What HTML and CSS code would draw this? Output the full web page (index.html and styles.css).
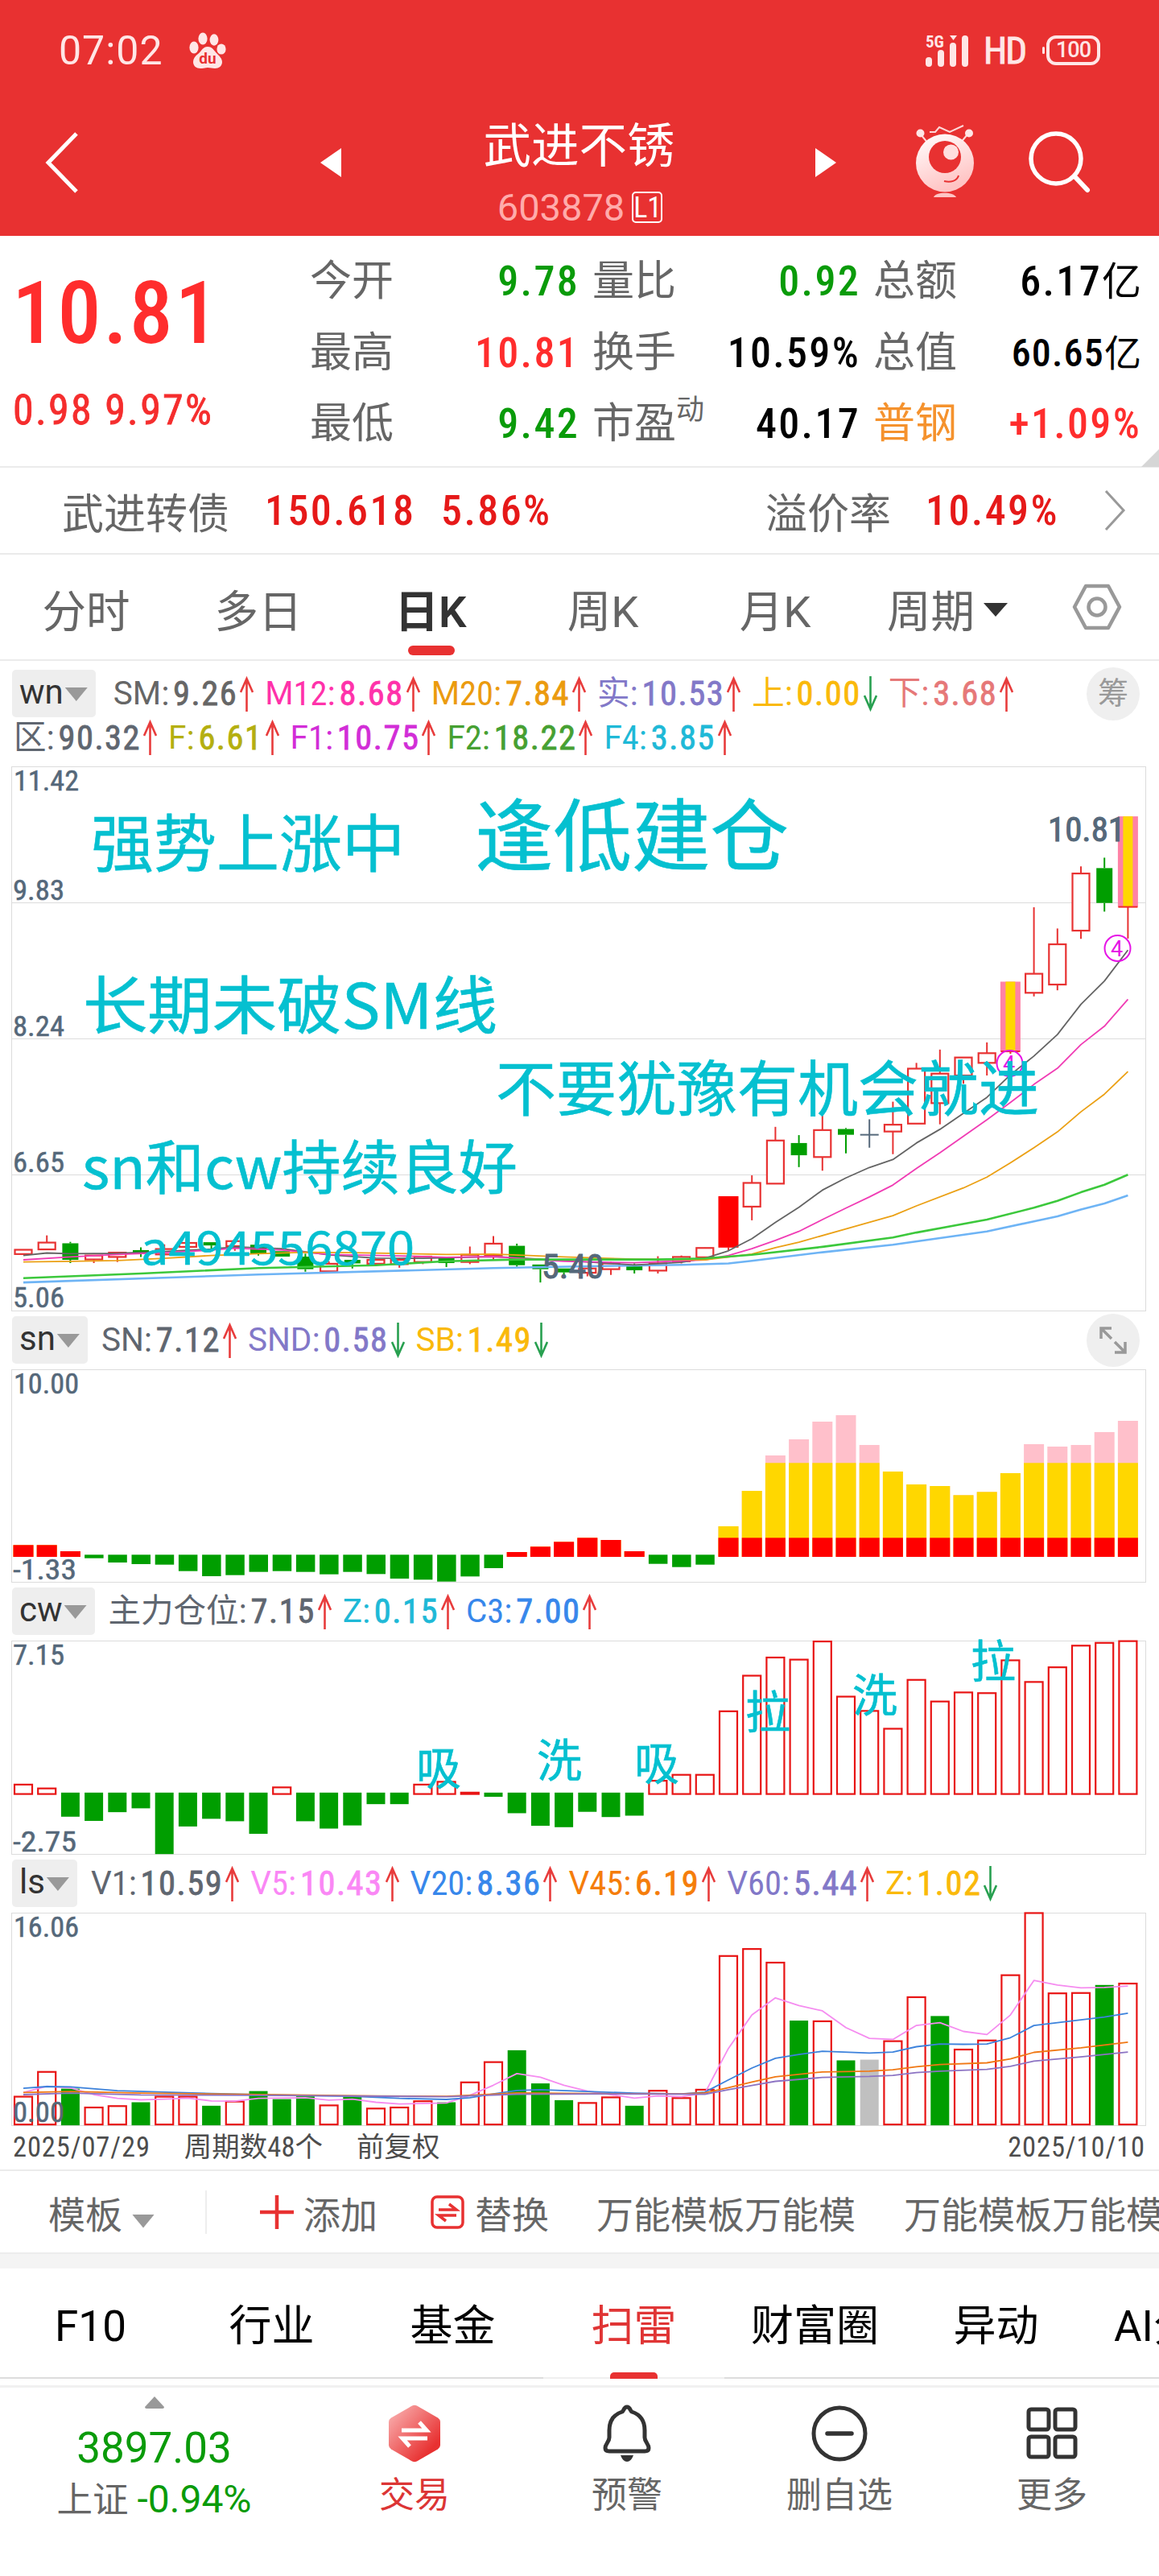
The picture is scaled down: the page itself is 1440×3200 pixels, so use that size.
FILE: index.html
```html
<!DOCTYPE html>
<html lang="zh-CN">
<head>
    <meta charset="UTF-8">
    <meta name="viewport" content="width=device-width, initial-scale=1.0">
    <title>武进不锈 603878</title>
    <link rel="stylesheet" href="styles.css">
</head>
<body>

    <header class="header">
        <div class="status">
            <span class="clock">07:02</span>
            <svg class="paw" width="46" height="46" viewBox="0 0 46 46">
                <g fill="#ffe6e6">
                    <ellipse cx="6" cy="19" rx="5.6" ry="7.4"/>
                    <ellipse cx="17" cy="8" rx="5.6" ry="7.6"/>
                    <ellipse cx="31" cy="9.5" rx="5.4" ry="7.2"/>
                    <ellipse cx="40" cy="21" rx="5.6" ry="6.6"/>
                    <path d="M23 18c-6 0-8 6-12 9-4 3-6 6-6 10 0 5 4 8 9 8 4 0 6-1 9-1s6 1 9 1c5 0 9-3 9-8 0-4-3-7-6-10-4-4-6-9-12-9z"/>
                </g>
                <text x="23" y="39" class="paw-text">du</text>
            </svg>
            <span class="grow"></span>
            <svg class="signal" width="56" height="42" viewBox="0 0 56 42">
                <text x="0" y="17" class="signal-text">5G</text>
                <g fill="#ffe6e6">
                    <rect x="0" y="29" width="8" height="12" rx="4"/>
                    <rect x="15" y="20" width="8" height="21" rx="4"/>
                    <rect x="30" y="11" width="8" height="30" rx="4"/>
                    <path d="M30 2h9l-4.5 6z"/>
                    <rect x="45" y="2" width="8" height="39" rx="4"/>
                </g>
            </svg>
            <span class="hd">HD</span>
            <span class="battery">100</span>
        </div>
        <div class="titlebar">
            <svg class="back" width="44" height="80" viewBox="0 0 44 80"><path d="M39 4L4 40l35 36" fill="none" stroke="#fff" stroke-width="5"/></svg>
            <svg class="prev" width="26" height="36" viewBox="0 0 26 36"><path d="M26 0v36L0 18z" fill="#fff"/></svg>
            <div class="title">
                <div class="name">武进不锈</div>
                <div class="code">603878<span class="level">L1</span></div>
            </div>
            <svg class="next" width="26" height="36" viewBox="0 0 26 36"><path d="M0 0v36l26-18z" fill="#fff"/></svg>
            <svg class="robot" width="76" height="94" viewBox="0 0 76 94">
                <defs>
                    <linearGradient id="body" x1="0" y1="0" x2="0.4" y2="1">
                        <stop offset="0" stop-color="#fff"/>
                        <stop offset="1" stop-color="#ffc4c4"/>
                    </linearGradient>
                </defs>
                <g stroke="#ffd8d8" stroke-width="2" fill="none">
                    <path d="M8 12l9 11M66 12l-9 11"/>
                    <path d="M19 9h7l5-6 13 6 17-8"/>
                </g>
                <circle cx="7.5" cy="10.5" r="5" fill="#ffe6e6"/>
                <circle cx="68" cy="10.5" r="5" fill="#ffe6e6"/>
                <circle cx="38" cy="47.5" r="36" fill="url(#body)"/>
                <circle cx="38" cy="40" r="20" fill="#e83131"/>
                <circle cx="45.5" cy="34" r="9.5" fill="#ffdede"/>
                <path d="M37 70c8 2 16 0 18-7" fill="none" stroke="#e83131" stroke-width="2"/>
                <path d="M24 90c2-7 25-7 28 0z" fill="#ffc4c4"/>
            </svg>
            <svg class="search" width="80" height="80" viewBox="0 0 80 80"><circle cx="35" cy="35" r="31" fill="none" stroke="#fff" stroke-width="5.5"/><path d="M58 57l16 17" stroke="#fff" stroke-width="6" stroke-linecap="round"/></svg>
        </div>
    </header>

    <section class="quote">
        <div class="price">
            <div class="last">10.81</div>
            <div class="change">0.98 9.97%</div>
        </div>
        <div class="stats">
            <div><span>今开</span><b class="down">9.78</b></div>
            <div><span>量比</span><b class="down">0.92</b></div>
            <div><span>总额</span><b>6.17<i>亿</i></b></div>
            <div><span>最高</span><b class="up">10.81</b></div>
            <div><span>换手</span><b>10.59%</b></div>
            <div><span>总值</span><b class="small">60.65<i>亿</i></b></div>
            <div><span>最低</span><b class="down">9.42</b></div>
            <div><span>市盈<sup>动</sup></span><b>40.17</b></div>
            <div><span class="sector">普钢</span><b class="up">+1.09%</b></div>
        </div>
        <svg class="corner" width="22" height="22" viewBox="0 0 22 22"><path d="M22 0v22H0z" fill="#d6d6d6"/></svg>
    </section>

    <section class="bond">
        <span>武进转债</span><b class="bond-price">150.618</b><b>5.86%</b>
        <span class="grow"></span>
        <span>溢价率</span><b class="premium">10.49%</b>
        <svg width="27" height="52" viewBox="0 0 27 52"><path d="M2 2l22 24L2 50" fill="none" stroke="#999" stroke-width="3"/></svg>
    </section>

    <nav class="periods">
        <a>分时</a><a>多日</a><a class="active">日K</a><a>周K</a><a>月K</a>
        <a>周期<i class="caret dark"></i></a>
        <svg width="62" height="58" viewBox="0 0 62 58"><path d="M17 3h28l14 26-14 26H17L3 29z" fill="none" stroke="#999" stroke-width="4.5" stroke-linejoin="round"/><circle cx="31" cy="29" r="10.5" fill="none" stroke="#999" stroke-width="4.5"/></svg>
    </nav>

    <section class="charts">
        <div class="legend main">
            <div class="row"><span class="tag">wn<i class="caret"></i></span><div class="items" id="wn1"></div><span class="round">筹</span></div>
            <div class="row second"><div class="items" id="wn2"></div></div>
        </div>
        <svg class="panel" id="kline" width="1440" height="677" viewBox="0 952 1440 677"></svg>

        <div class="legend">
            <div class="row"><span class="tag">sn<i class="caret"></i></span><div class="items" id="sn"></div>
                <span class="round"><svg width="34" height="34" viewBox="0 0 34 34"><path d="M2 15V2h13M3 3l12 12M32 19v13H19M31 31L19 19" fill="none" stroke="#999" stroke-width="3.5"/></svg></span>
            </div>
        </div>
        <svg class="panel" id="snChart" width="1440" height="265" viewBox="0 1701 1440 265"></svg>

        <div class="legend">
            <div class="row"><span class="tag">cw<i class="caret"></i></span><div class="items" id="cw"></div></div>
        </div>
        <svg class="panel" id="cwChart" width="1440" height="266" viewBox="0 2038 1440 266"></svg>

        <div class="legend">
            <div class="row"><span class="tag">ls<i class="caret"></i></span><div class="items" id="ls"></div></div>
        </div>
        <svg class="panel" id="lsChart" width="1440" height="265" viewBox="0 2376 1440 265"></svg>

        <div class="dates"><span>2025/07/29</span><span>周期数48个</span><span>前复权</span><span class="grow"></span><span>2025/10/10</span></div>
    </section>

    <div class="templates">
        <span class="tpl">模板<i class="caret"></i></span>
        <span class="divider"></span>
        <svg width="42" height="42" viewBox="0 0 42 42"><path d="M21 0v42M0 21h42" stroke="#e83131" stroke-width="4.5"/></svg>
        <span class="add">添加</span>
        <svg width="42" height="42" viewBox="0 0 42 42"><rect x="2" y="2" width="38" height="38" rx="6" fill="none" stroke="#e83131" stroke-width="3.5"/><path d="M10 18h22l-9-7M32 25H10l9 7" fill="none" stroke="#e83131" stroke-width="3.5"/></svg>
        <span class="swap">替换</span>
        <span class="tpl-name">万能模板万能模</span>
        <span>万能模板万能模</span>
    </div>

    <nav class="sections">
        <a>F10</a><a>行业</a><a>基金</a><a class="active">扫雷</a><a>财富圈</a><a>异动</a><a class="cut">AI分析</a>
    </nav>

    <footer class="footer">
        <div class="index">
            <svg width="24" height="15" viewBox="0 0 24 15"><path d="M12 0l12 13q0 2-2 2H2q-2 0-2-2z" fill="#999"/></svg>
            <div class="index-value">3897.03</div>
            <div class="index-name">上证 <em>-0.94%</em></div>
        </div>
        <div class="action trade">
            <svg width="66" height="72" viewBox="0 0 66 72">
                <defs>
                    <linearGradient id="hex" x1="0" y1="0" x2="1" y2="1">
                        <stop offset="0.1" stop-color="#f8a8a8"/>
                        <stop offset="0.8" stop-color="#e83131"/>
                    </linearGradient>
                </defs>
                <path d="M30 1.5q3-1.5 6 0l26 15q3 2 3 5v29q0 3-3 5l-26 15q-3 1.5-6 0l-26-15q-3-2-3-5v-29q0-3 3-5z" fill="url(#hex)"/>
                <path d="M17 32h31l-9-10M49 42H18l9 10" fill="none" stroke="#fff" stroke-width="5"/>
            </svg>
            交易
        </div>
        <div class="action">
            <svg width="66" height="72" viewBox="0 0 66 72"><path d="M33 3c-4 0-4 5-6 6C15 13 11 21 11 32v9c0 5-5 8-5 13 0 3 2 4 5 4h44c3 0 5-1 5-4 0-5-5-8-5-13v-9c0-11-4-19-16-23-2-1-2-6-6-6z" fill="none" stroke="#333" stroke-width="5"/><path d="M25 63h16q-3 8-8 8t-8-8z" fill="#333"/></svg>
            预警
        </div>
        <div class="action">
            <svg width="72" height="72" viewBox="0 0 72 72"><circle cx="36" cy="36" r="32" fill="none" stroke="#333" stroke-width="5"/><path d="M21 36h30" stroke="#333" stroke-width="5.5" stroke-linecap="round"/></svg>
            删自选
        </div>
        <div class="action">
            <svg width="66" height="72" viewBox="0 0 66 72"><g fill="none" stroke="#333" stroke-width="5"><rect x="4" y="6" width="25" height="25" rx="3"/><rect x="37" y="6" width="25" height="25" rx="3"/><rect x="4" y="40" width="25" height="25" rx="3"/><rect x="37" y="40" width="25" height="25" rx="3"/></g></svg>
            更多
        </div>
    </footer>

    <script src="charts.js"></script>
</body>
</html>
```

FILE: styles.css
```css
* {
    box-sizing: border-box;
}
body {
    margin: 0;
    width: 1440px;
    height: 3200px;
    overflow: hidden;
    background: #fff;
    font-family: Roboto, "Noto Sans CJK SC", sans-serif;
    color: #666;
}
svg {
    display: block;
    flex: none;
}
.grow {
    flex: 1;
}
.up {
    color: #ff2d2d;
}
.down {
    color: #0a9b0a;
}

/* header */
.header {
    height: 293px;
    background: #e83131;
    color: #fff;
}
.status {
    display: flex;
    align-items: center;
    height: 125px;
    padding: 0 73px 0 73px;
    color: #ffe6e6;
}
.clock {
    width: 162px;
    font-size: 50px;
    letter-spacing: 1px;
}
.paw-text {
    font: 700 19px Roboto, sans-serif;
    fill: #e83131;
    text-anchor: middle;
}
.signal {
    overflow: visible;
}
.signal-text {
    font: 700 21px Roboto, sans-serif;
    font-stretch: 75%;
    fill: #ffe6e6;
}
.hd {
    margin: 0 0 0 16px;
    width: 71px;
    font-size: 47px;
    font-stretch: 75%;
    letter-spacing: -2px;
    -webkit-text-stroke: 1px #ffe6e6;
}
.battery {
    position: relative;
    width: 67px;
    height: 37px;
    margin: 0 0 0 7px;
    border: 4px solid #ffe6e6;
    border-radius: 12px;
    font-size: 27px;
    font-weight: 500;
    line-height: 29px;
    text-align: center;
    letter-spacing: -1px;
}
.battery::before {
    content: "";
    position: absolute;
    left: -9px;
    top: 10px;
    width: 3px;
    height: 9px;
    border-radius: 2px;
    background: #ffe6e6;
}
.titlebar {
    display: flex;
    align-items: center;
    height: 154px;
    padding: 0 80px 0 56px;
}
.prev {
    margin-left: 298px;
}
.title {
    width: 589px;
    margin-top: 28px;
    text-align: center;
}
.name {
    height: 76px;
    margin: 7px 0 0 2px;
    font-size: 59.5px;
    line-height: 76px;
}
.code {
    display: flex;
    justify-content: center;
    align-items: center;
    gap: 9px;
    height: 76px;
    padding-left: 4px;
    font-size: 47px;
    color: #ffabab;
}
.level {
    width: 38px;
    height: 39px;
    border: 2px solid #fff;
    border-radius: 5px;
    font-size: 36px;
    font-stretch: 75%;
    font-weight: 400;
    line-height: 36px;
    color: #fff;
}
.robot {
    margin-left: 97px;
}
.search {
    margin: 0 0 0 65px;
}

/* quote block */
.quote {
    position: relative;
    display: flex;
    height: 288px;
    border-bottom: 2px solid #ebebeb;
}
.price {
    width: 385px;
    color: #f52d2d;
    font-stretch: 75%;
}
.last {
    height: 180px;
    padding: 6px 0 0 15px;
    font-size: 108px;
    font-weight: 500;
    line-height: 180px;
    letter-spacing: 2.6px;
    color: #ff2d2d;
}
.change {
    padding: 1px 0 0 16px;
    font-size: 52px;
    line-height: 72px;
    letter-spacing: 2.3px;
    -webkit-text-stroke: 0.8px #f52d2d;
}
.stats {
    display: grid;
    grid-template-columns: 335px 333px 333px;
    grid-auto-rows: 88.7px;
    column-gap: 16px;
    padding-top: 13px;
    font-size: 52px;
    line-height: 88.7px;
}
.stats div {
    display: flex;
    justify-content: space-between;
}
.stats b {
    font-stretch: 75%;
    font-weight: 500;
    letter-spacing: 2.3px;
}
.stats b:not(.up):not(.down) {
    color: #000;
}
.stats b i {
    font-size: 49px;
    font-style: normal;
    font-weight: 400;
    letter-spacing: 0;
}
.stats .small {
    font-size: 48px;
    letter-spacing: 1.2px;
}
.stats .small i {
    font-size: 46px;
}
.stats sup {
    position: relative;
    top: -9px;
    font-size: 35px;
    line-height: 0;
    vertical-align: 14px;
}
.sector {
    color: #f5922d;
}
.corner {
    position: absolute;
    right: 0;
    bottom: -1px;
}

/* convertible bond */
.bond {
    display: flex;
    align-items: center;
    height: 108px;
    padding: 0 41px 0 77px;
    border-bottom: 2px solid #ebebeb;
    font-size: 52px;
}
.bond b {
    font-stretch: 75%;
    font-weight: 500;
    letter-spacing: 2.4px;
    color: #e61919;
}
.bond-price {
    width: 219px;
    margin-left: 44px;
}
.bond .premium {
    width: 222px;
    margin-left: 43px;
}

/* period tabs */
.periods {
    display: flex;
    height: 132px;
    border-bottom: 2px solid #ebebeb;
    font-size: 54.5px;
    line-height: 143px;
}
.periods a {
    position: relative;
    width: 214px;
    text-align: center;
}
.periods .active {
    color: #333;
    font-weight: 600;
}
.periods .active::after {
    content: "";
    position: absolute;
    left: 79px;
    bottom: 5px;
    width: 58px;
    height: 12px;
    border-radius: 6px;
    background: #e83131;
}
.periods svg {
    margin: 36px 0 0 48px;
}
.caret {
    display: inline-block;
    width: 28px;
    height: 17px;
    margin-left: 12px;
    background: #999;
    clip-path: polygon(0 0, 100% 0, 50% 100%);
}
.caret.dark {
    width: 30px;
    margin-left: 11px;
    margin-bottom: 13px;
    background: #333;
}

/* charts */
.legend {
    height: 72px;
    padding: 6px 0 7px 15px;
}
.legend.main {
    height: 131px;
    padding-top: 11px;
}
.row {
    display: flex;
    align-items: center;
    height: 59px;
    font-size: 42.5px;
    line-height: 55px;
}
.row.second {
    height: 50px;
}
.tag {
    height: 59px;
    padding: 0 10px 0 9px;
    border-radius: 5px;
    background: #eee;
    font-size: 42px;
    line-height: 56px;
    color: #333;
}
.tag .caret {
    margin-left: 2px;
    margin-bottom: 3px;
}
.items {
    display: flex;
    gap: 14px;
    margin-left: 17px;
    flex: 1;
}
.main .items {
    margin-left: 22px;
}
.main .second .items {
    margin-left: 2px;
}
.item {
    display: flex;
    align-items: center;
    font-stretch: 75%;
}
.item em {
    font-size: 40.5px;
    font-style: normal;
    font-stretch: 100%;
}
.item i {
    font-style: normal;
    margin-left: 5px;
    letter-spacing: 1.5px;
    -webkit-text-stroke: 0.8px currentColor;
}
.item svg {
    margin-left: 3px;
}
.round {
    display: flex;
    align-items: center;
    justify-content: center;
    width: 66px;
    height: 66px;
    margin: 0 24px 0 0;
    border-radius: 50%;
    background: #efefef;
    font-size: 38px;
    color: #999;
}
.panel {
    overflow: visible;
}
.panel text {
    font-family: Roboto, "Noto Sans CJK SC", sans-serif;
}
.panel .axis {
    font-size: 35px;
    font-stretch: 75%;
    fill: #55687a;
    stroke: #55687a;
    stroke-width: 0.5px;
}
.panel .mark {
    font-size: 42px;
    font-stretch: 75%;
    fill: #55687a;
    stroke: #55687a;
    stroke-width: 1px;
}
.panel .note {
    font-family: "Noto Sans CJK SC", sans-serif;
    fill: #05c0d0;
    stroke: #05c0d0;
    stroke-width: 0.6px;
}
.panel .signal4 {
    font-size: 27px;
    fill: #e614e6;
    text-anchor: middle;
}
.dates {
    display: flex;
    height: 56px;
    padding: 0 17px 4px 16px;
    border-bottom: 2px solid #ebebeb;
    font-size: 34.5px;
    font-stretch: 75%;
    line-height: 53px;
    letter-spacing: 0.9px;
    color: #4d4d4d;
}
.dates span + span {
    margin-left: 42px;
    letter-spacing: 0;
}
.dates span:last-child {
    letter-spacing: 0.9px;
}

/* template bar */
.templates {
    display: flex;
    align-items: center;
    height: 101px;
    padding-left: 60px;
    overflow: hidden;
    font-size: 46px;
    white-space: nowrap;
}
.tpl {
    width: 195px;
    flex: none;
}
.divider {
    width: 2px;
    height: 54px;
    margin-right: 66px;
    background: #eee;
    flex: none;
}
.add {
    margin: 0 66px 0 12px;
}
.swap {
    margin: 0 59px 0 13px;
}
.tpl-name {
    margin-right: 60px;
}

/* section tabs */
.sections {
    display: flex;
    height: 157px;
    padding-top: 20px;
    overflow: hidden;
    background: linear-gradient(#ececec 2px, #f4f4f4 2px, #f4f4f4 20px, #fff 20px);
    font-size: 53px;
    line-height: 145px;
    color: #000;
}
.sections a {
    position: relative;
    flex: none;
    width: 225px;
    border-bottom: 2px solid #ddd;
    text-align: center;
}
.sections .active {
    color: #e03535;
    border-color: #efefef;
}
.sections .active::after {
    content: "";
    position: absolute;
    left: 83px;
    bottom: -2px;
    width: 59px;
    height: 8px;
    border-radius: 5px 5px 0 0;
    background: #e83131;
}
.sections .cut {
    width: 90px;
    padding-left: 34px;
    overflow: hidden;
    text-align: left;
    white-space: nowrap;
}

/* bottom bar */
.footer {
    display: grid;
    grid-template-columns: 383px repeat(4, 264px);
    margin-top: 8px;
    border-top: 3px solid #f1f1f1;
}
.index {
    display: flex;
    flex-direction: column;
    align-items: center;
    padding-top: 11px;
}
.index-value {
    margin-top: 20px;
    font-size: 53px;
    line-height: 58px;
    color: #0a9b0a;
}
.index-name {
    margin-top: 4px;
    font-size: 44.5px;
    line-height: 61px;
    white-space: nowrap;
}
.index-name em {
    font-size: 48px;
    font-style: normal;
    color: #0a9b0a;
}
.action {
    display: flex;
    flex-direction: column;
    align-items: center;
    padding-top: 21px;
    font-size: 44px;
    line-height: 83px;
}
.trade {
    color: #dc3535;
}
```

FILE: charts.js
```js
const GREEN = '#009e00';
const RED = '#e81414';
const STEP = 29.2;

const cx = i => 29 + i * STEP;

// ---------- legends ----------
const ARROWS = {
    up: '<svg width="17" height="44" viewBox="0 0 17 44"><path d="M8.5 44V3M1 20L8.5 3 16 20" fill="none" stroke="#e83c3c" stroke-width="2.6"/></svg>',
    down: '<svg width="17" height="44" viewBox="0 0 17 44"><path d="M8.5 0v41M1 24l7.5 17L16 24" fill="none" stroke="#28a050" stroke-width="2.6"/></svg>'
};

function legend(id, items) {
    document.getElementById(id).innerHTML = items.map(([name, value, color, dir]) => {
        // letters are set wider than the digits
        const label = name.replace(/[^0-9]+/, m => `<em>${m}</em>`);
        return `<span class="item" style="color:${color}">${label}:<i>${value}</i>${ARROWS[dir || 'up']}</span>`;
    }).join('');
}

legend('wn1', [['SM', '9.26', '#666'], ['M12', '8.68', '#ff32aa'], ['M20', '7.84', '#eb9b0f'],
    ['实', '10.53', '#8278c8'], ['上', '0.00', '#fab90a', 'down'], ['下', '3.68', '#e67878']]);
legend('wn2', [['区', '90.32', '#5f6670'], ['F', '6.61', '#b4af0f'], ['F1', '10.75', '#d22dd7'],
    ['F2', '18.22', '#46a032'], ['F4', '3.85', '#1eb9d7']]);
legend('sn', [['SN', '7.12', '#5f6670'], ['SND', '0.58', '#8278c8', 'down'], ['SB', '1.49', '#fab90a', 'down']]);
legend('cw', [['主力仓位', '7.15', '#5f6670'], ['Z', '0.15', '#1eb9d7'], ['C3', '7.00', '#3787eb']]);
legend('ls', [['V1', '10.59', '#5f6670'], ['V5', '10.43', '#fa87f5'], ['V20', '8.36', '#3787eb'],
    ['V45', '6.19', '#f57d0a'], ['V60', '5.44', '#8278c8'], ['Z', '1.02', '#fab90a', 'down']]);

// ---------- svg helpers ----------
function rect(x, y, w, h, fill) {
    return `<rect x="${x}" y="${y}" width="${w}" height="${h}" fill="${fill}"/>`;
}
function hollow(x, y, w, h, color) {
    return `<rect x="${x + 1}" y="${y + 1}" width="${w - 2}" height="${Math.max(h - 2, 0.5)}" fill="#fff" stroke="${color}" stroke-width="2.2"/>`;
}
function line(x1, y1, x2, y2, color, w = 1.5) {
    return `<line x1="${x1}" y1="${y1}" x2="${x2}" y2="${y2}" stroke="${color}" stroke-width="${w}"/>`;
}
function curve(points, toY, color, w) {
    const pts = points.map(([i, v]) => `${cx(i).toFixed(1)},${toY(v).toFixed(1)}`).join(' ');
    return `<polyline points="${pts}" fill="none" stroke="${color}" stroke-width="${w}" stroke-linejoin="round"/>`;
}
function text(cls, x, y, str, size, len) {
    const extra = (size ? ` font-size="${size}"` : '') + (len ? ` textLength="${len}" lengthAdjust="spacingAndGlyphs"` : '');
    return `<text class="${cls}" x="${x}" y="${y}"${extra}>${str}</text>`;
}
function frame(top, bottom) {
    return `<rect x="14.5" y="${top + 0.5}" width="1409" height="${bottom - top - 1}" fill="none" stroke="#dcdcdc"/>`;
}
function draw(id, html) {
    document.getElementById(id).innerHTML = html;
}

// ---------- k line: [type, high, top, bottom, low] ----------
const candles = [
    ['r', 1372, 1372, 1384, 1384], ['r', 1332, 1352, 1371, 1371], ['g', 1350, 1354, 1400, 1409], ['r', 1388, 1388, 1399, 1409],
    ['r', 1380, 1380, 1392, 1406], ['g', 1365, 1373, 1382, 1392], ['r', 1357, 1370, 1385, 1385], ['r', 1353, 1353, 1364, 1364],
    ['g', 1351, 1351, 1360, 1370], ['r', 1348, 1348, 1362, 1375], ['g', 1356, 1358, 1382, 1388], ['g', 1376, 1376, 1391, 1391],
    ['g', 1383, 1391, 1426, 1433], ['r', 1404, 1411, 1432, 1432], ['g', 1400, 1400, 1410, 1424], ['r', 1400, 1400, 1411, 1418],
    ['r', 1395, 1400, 1412, 1422], ['r', 1391, 1391, 1406, 1412], ['g', 1395, 1395, 1409, 1420], ['r', 1363, 1386, 1406, 1412],
    ['r', 1334, 1355, 1388, 1400], ['g', 1355, 1361, 1415, 1419], ['g', 1413, 1413, 1426, 1463], ['g', 1424, 1424, 1435, 1446],
    ['r', 1424, 1424, 1436, 1446], ['r', 1405, 1410, 1426, 1442], ['g', 1410, 1418, 1429, 1438], ['r', 1390, 1410, 1430, 1438],
    ['r', 1388, 1392, 1404, 1410], ['r', 1366, 1367, 1393, 1393], ['solid', 1223, 1223, 1366, 1373], ['r', 1165, 1186, 1252, 1290],
    ['r', 1030, 1068, 1188, 1188], ['g', 1053, 1075, 1109, 1142], ['r', 995, 1039, 1114, 1152], ['g', 1033, 1036, 1052, 1104],
    ['cross', 1009, 1052, 1052, 1088], ['r', 960, 1024, 1043, 1106], ['r', 852, 868, 1021, 1021], ['r', 815, 882, 964, 1023],
    ['r', 837, 837, 887, 910], ['r', 795, 825, 852, 887], ['limit', 626, 626, 820, 827], ['r', 419, 604, 657, 667],
    ['r', 478, 522, 634, 650], ['r', 305, 325, 484, 507], ['g', 281, 310, 407, 431], ['limit', 166, 166, 418, 506]
];
const averages = [
    ['#6eb4f5', 2.6, [[0, 1463], [10, 1441], [20, 1423], [24, 1418], [28, 1414], [30, 1410], [31, 1403], [34, 1379], [37, 1358], [41, 1321], [43, 1293], [44, 1279], [45, 1260], [46, 1243], [47, 1221]]],
    ['#646464', 1.8, [[0, 1388], [1, 1381], [2, 1383], [4, 1382], [6, 1377], [8, 1370], [9, 1364], [11, 1369], [13, 1386], [15, 1395], [17, 1396], [20, 1391], [22, 1398], [24, 1406], [26, 1414], [28, 1407], [29, 1396], [30, 1375], [31, 1341], [32, 1296], [33, 1254], [34, 1206], [35, 1172], [36, 1143], [37, 1121], [38, 1075], [39, 1037], [40, 992], [41, 948], [42, 885], [43, 833], [44, 773], [45, 689], [46, 624], [47, 538]]],
    ['#f03cb4', 1.8, [[0, 1400], [2, 1392], [4, 1385], [6, 1380], [8, 1373], [9, 1368], [11, 1373], [13, 1385], [16, 1389], [18, 1393], [20, 1391], [23, 1404], [26, 1408], [29, 1400], [30, 1388], [31, 1369], [32, 1346], [33, 1321], [34, 1288], [35, 1256], [36, 1225], [37, 1192], [38, 1146], [39, 1102], [40, 1056], [41, 1010], [42, 962], [43, 912], [44, 867], [45, 801], [46, 750], [47, 675]]],
    ['#eba014', 1.8, [[0, 1406], [2, 1404], [4, 1402], [6, 1396], [8, 1388], [10, 1383], [12, 1379], [14, 1380], [18, 1385], [20, 1384], [23, 1392], [26, 1398], [29, 1400], [31, 1384], [32, 1366], [33, 1351], [35, 1314], [37, 1277], [38, 1250], [40, 1200], [41, 1170], [42, 1130], [43, 1088], [44, 1044], [45, 988], [46, 939], [47, 876]]],
    ['#3cc83c', 2.6, [[0, 1451], [5, 1438], [10, 1423], [15, 1415], [18, 1404], [21, 1399], [24, 1399], [27, 1399], [29, 1396], [31, 1386], [34, 1364], [37, 1338], [38, 1324], [41, 1288], [43, 1255], [44, 1236], [45, 1212], [46, 1191], [47, 1163]]]
];

function drawKline() {
    const toY = v => 940 + v / 2.24;
    let out = frame(952, 1629);
    [1121.5, 1290.5, 1459.5].forEach(y => out += line(14, y, 1424, y, '#dcdcdc', 1));
    candles.forEach(([type, high, top, bottom, low], i) => {
        const x = cx(i);
        const [h, t, b, l] = [high, top, bottom, low].map(toY);
        const color = { g: GREEN, cross: '#55687a' }[type] || '#e83232';
        out += line(x, h, x, t, color, 2) + line(x, b, x, l, color, 2);
        if (type === 'r') out += hollow(x - 11.5, t - 1, 23, b - t + 2, color);
        if (type === 'g') out += rect(x - 10, t, 20, b - t, color);
        if (type === 'solid') out += rect(x - 12.5, t, 25, b - t, '#f00');
        if (type === 'cross') out += line(x - 11.5, t, x + 11.5, t, color, 2);
        if (type === 'limit') {
            out += rect(x - 12.5, t, 25, b - t, '#ff82a5') + rect(x - 6, t, 12, b - t, '#ffd700');
            out += line(x - 12, b, x + 12, b, '#f02828', 2);
        }
    });
    averages.forEach(([color, w, pts]) => out += curve(pts, toY, color, w));
    [[1388.5, 1178], [1254.5, 1321]].forEach(([x, y]) => {
        out += `<circle cx="${x}" cy="${y}" r="16" fill="none" stroke="#e614e6" stroke-width="2"/>` + text('signal4', x - 1, y + 9.5, '4');
    });
    out += text('axis', 17, 982, '11.42', 0, 81) + text('axis', 16, 1118, '9.83', 0, 64) + text('axis', 16, 1287, '8.24', 0, 64) +
        text('axis', 16, 1456, '6.65', 0, 64) + text('axis', 16, 1624, '5.06', 0, 64);
    out += text('mark', 1302, 1045, '10.81', 0, 96) + text('mark', 673, 1588, '5.40', 0, 77);
    out += text('note', 113, 1077, '强势上涨中', 78) + text('note', 590, 1074, '逢低建仓', 97.5) +
        text('note', 103, 1278, '长期未破SM线', 78, 515) + text('note', 102, 1477, 'sn和cw持续良好', 72.5, 541) +
        text('note', 616, 1380, '不要犹豫有机会就进', 75) + text('note', 175, 1571, 'a494556870', 56, 340);
    draw('kline', out);
}

// ---------- sn: stacked bars ----------
const sn = [
    868, 868, 891, 917, 933, 939, 941, 965, 984, 980, 968, 965, 968, 977, 968, 976, 993, 997, 1004, 985, 954,
    894, 874, 856, 841, 849, 891, 938, 950, 941,
    798, 666, 534, 474, 408, 384, 495, 594, 642, 648, 682, 670, 600, 492, 501, 495, 447, 405
];

function drawSn() {
    const toY = v => 1630 + v / 3;
    let out = frame(1701, 1966);
    sn.forEach((v, i) => {
        const x = cx(i) - 12.5;
        if (v > 904) {
            out += rect(x + 1, toY(904), 23.5, toY(v) - toY(904), GREEN);
            return;
        }
        const bands = [[v, '#ffc0cb'], [Math.max(v, 562), '#ffd700'], [Math.max(v, 841), '#f00']];
        bands.forEach(([top, color]) => out += rect(x, toY(top), 25, toY(912) - toY(top), color));
    });
    out += text('axis', 17, 1731, '10.00', 0, 81) + text('axis', 16, 1962, '-1.33', 0, 79);
    draw('snChart', out);
}

// ---------- cw: hollow up, solid down ----------
const cw = [
    454, 465, 546, 558, 533, 522, 653, 574, 552, 559, 595, 462, 559, 580, 571, 510, 510, 454, 446, 477,
    489, 536, 572, 576, 532, 547, 543, 443, 426, 426, 244, 142, 90, 96, 44, 202, 243, 294, 154, 216,
    190, 192, 98, 160, 118, 56, 48, 43
];

function drawCw() {
    const toY = v => 2020 + v / 2.306;
    let out = frame(2038, 2304);
    cw.forEach((v, i) => {
        if (v > 480) {
            out += rect(cx(i) - 11.5, toY(477), 23, toY(v) - toY(477), GREEN);
        } else {
            out += hollow(cx(i) - 12, toY(v) - 1, 24, toY(481) - toY(v) + 2, RED);
        }
    });
    out += text('axis', 16, 2068, '7.15', 0, 64) + text('axis', 16, 2300, '-2.75', 0, 79);
    [['吸', 517, 2217], ['洗', 667, 2207], ['吸', 788, 2211], ['拉', 926, 2147], ['洗', 1059, 2126], ['拉', 1206, 2084]]
        .forEach(([s, x, y]) => out += text('note', x, y, s, 56));
    draw('cwChart', out);
}

// ---------- ls: turnover bars with averages ----------
const ls = 'r1348 r1277 g1325 r1379 r1375 g1364 r1348 r1348 g1374 r1362 g1332 g1355 g1347 r1373 g1348 r1382 r1379 r1361 g1364 r1307 r1249 g1215 g1310 g1358 r1366 r1350 g1374 r1331 r1352 r1328 r945 r925 r964 g1130 r1132 g1244 n1242 r1189 r1063 g1117 r1213 r1187 r1000 r822 r1052 r1051 g1028 r1024'.split(' ');
const lsLines = [
    ['#f58cf0', [[0, 1336], [1, 1318], [2, 1323], [3, 1342], [4, 1353], [5, 1357], [6, 1355], [7, 1352], [8, 1360], [9, 1361], [10, 1353], [12, 1351], [13, 1358], [14, 1355], [15, 1364], [16, 1369], [18, 1366], [19, 1344], [20, 1315], [21, 1282], [22, 1292], [23, 1315], [24, 1332], [25, 1342], [26, 1352], [27, 1346], [28, 1348], [29, 1338], [30, 1210], [31, 1114], [32, 1065], [33, 1087], [34, 1102], [35, 1150], [36, 1181], [37, 1184], [38, 1144], [39, 1136], [40, 1161], [41, 1170], [42, 1114], [43, 1015], [44, 1028], [45, 1036], [46, 1035], [47, 1031]]],
    ['#3c82dc', [[0, 1324], [1, 1319], [2, 1320], [4, 1331], [6, 1335], [8, 1339], [10, 1342], [14, 1347], [16, 1353], [18, 1356], [19, 1351], [20, 1340], [21, 1330], [22, 1328], [24, 1333], [26, 1338], [28, 1340], [29, 1335], [30, 1300], [31, 1266], [32, 1238], [33, 1227], [34, 1218], [36, 1223], [37, 1220], [38, 1205], [39, 1197], [40, 1198], [41, 1197], [42, 1179], [43, 1144], [44, 1136], [46, 1120], [47, 1109]]],
    ['#f07814', [[0, 1336], [2, 1333], [5, 1338], [10, 1342], [15, 1346], [18, 1347], [20, 1341], [21, 1337], [24, 1339], [28, 1340], [29, 1337], [30, 1322], [31, 1306], [32, 1291], [34, 1277], [36, 1275], [37, 1271], [38, 1262], [39, 1256], [41, 1251], [42, 1240], [43, 1221], [45, 1208], [47, 1192]]],
    ['#8c73c3', [[0, 1342], [2, 1338], [5, 1343], [10, 1344], [18, 1348], [21, 1341], [25, 1340], [29, 1341], [30, 1328], [31, 1316], [32, 1304], [34, 1293], [36, 1290], [37, 1287], [38, 1279], [39, 1275], [41, 1270], [42, 1261], [43, 1246], [45, 1234], [47, 1220]]]
];

function drawLs() {
    const toY = v => 2020 + v / 2.306;
    let out = frame(2376, 2641);
    ls.forEach((s, i) => {
        const y = toY(+s.slice(1));
        const h = toY(1430) - y;
        if (s[0] === 'r') out += hollow(cx(i) - 12, y - 1, 24, h + 1, RED);
        else out += rect(cx(i) - 11.5, y, 23, h, s[0] === 'g' ? GREEN : '#c0c0c0');
    });
    lsLines.forEach(([color, pts]) => out += curve(pts, toY, color, 1.8));
    out += text('axis', 17, 2406, '16.06', 0, 81) + text('axis', 16, 2636, '0.00', 0, 64);
    draw('lsChart', out);
}

drawKline();
drawSn();
drawCw();
drawLs();
```
